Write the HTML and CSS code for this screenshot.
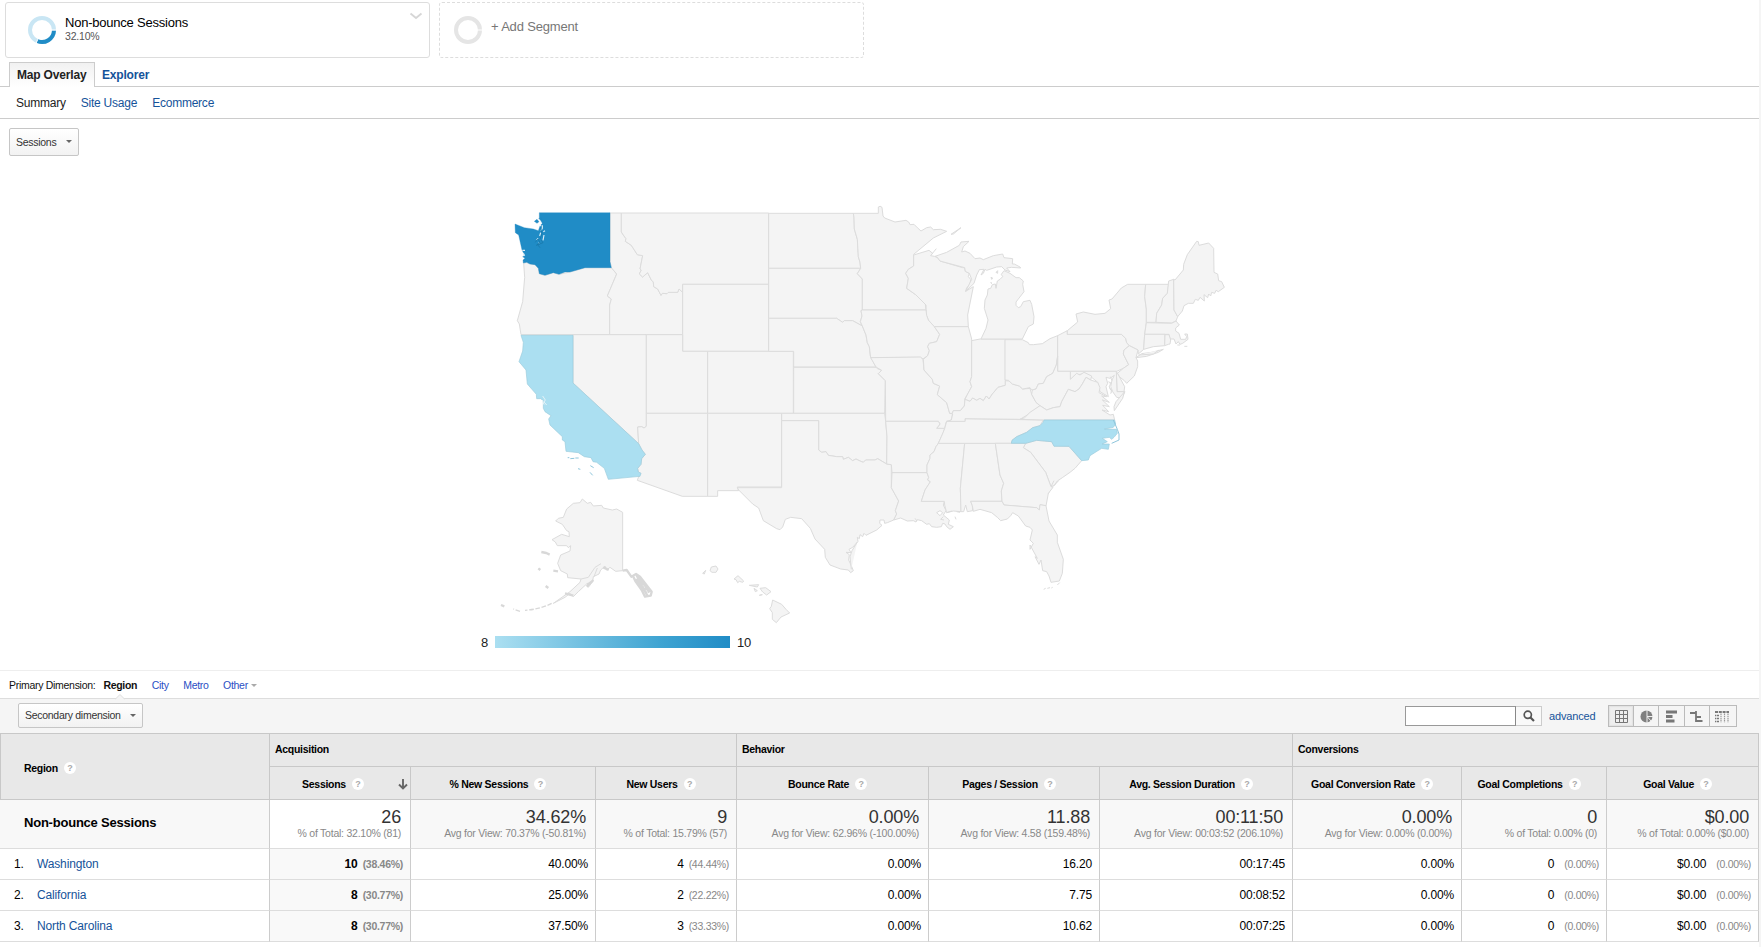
FILE: index.html
```html
<!DOCTYPE html>
<html lang="en">
<head>
<meta charset="utf-8">
<title>Location - Map Overlay</title>
<link rel="stylesheet" href="styles.css">
</head>
<body>
<div class="page">
  <section class="segments">
    <div class="segment">
      <svg class="ring" width="30" height="30" viewBox="0 0 30 30"><g fill="none" stroke-width="4"><circle cx="15" cy="15" r="12" stroke="#c9e6f4"/><path d="M27 15.500A12 12 0 0 1 10.200 26" stroke="#208cc6"/></g><path d="M25 15H29.500M10.800 24.300L9.200 28" stroke="#fff" stroke-width="1"/></svg>
      <div class="segment-text"><div class="segment-name">Non-bounce Sessions</div><div class="segment-pct">32.10%</div></div>
      <svg class="chevron" width="14" height="8" viewBox="0 0 14 8"><path d="M1.500 1.500L7 6L12.500 1.500" fill="none" stroke="#d6d6d6" stroke-width="1.800"/></svg>
    </div>
    <div class="segment segment-add">
      <svg class="ring" width="30" height="30" viewBox="0 0 30 30"><circle cx="15" cy="15" r="12" fill="none" stroke="#e5e5e5" stroke-width="4"/><path d="M25 15H29.500" stroke="#fff"/></svg>
      <div class="segment-label">+ Add Segment</div>
    </div>
  </section>
  <nav class="tabs"><a class="tab tab-active">Map Overlay</a><a class="tab">Explorer</a></nav>
  <nav class="subnav"><span>Summary</span><a>Site Usage</a><a>Ecommerce</a></nav>
  <section class="overlay">
    <button class="btn metric">Sessions<i class="caret"></i></button>
    <svg class="map" width="1759" height="440" viewBox="-1470 0 5277 1320">
      <g class="states">
        <!-- West -->
        <path d="M101 219L110 217L120 222L135 224L145 235L148 251L165 256L190 248L207 253L240 246L285 233H364L380 252L352 318L364 327L359 345V434H93L88 402L82 392L98 335L104 262Z"/>
        <path d="M360 69H394V126L402 138L408 146L406 154L424 166L442 194L458 197L450 237L454 240L448 252L458 261L473 248L484 270L490 276L491 290L503 297L513 316L517 310L531 311L535 307H563L567 297L578 307V434H359V345L364 327L352 318L380 252L364 233L360 215Z"/>
        <path d="M394 69H836V283H578V307L567 297L563 307H535L531 311L517 310L513 316L503 297L491 290L490 276L484 270L473 248L458 261L448 252L454 240L450 237L458 197L442 194L424 166L406 154L408 146L402 138L394 126Z"/>
        <path d="M578 283H836V484H578Z"/>
        <path d="M249 434H469V709L462 714L455 710L443 711L446 761L249 579Z"/>
        <path d="M469 434H578V484H653V670H469Z"/>
        <path d="M469 670H653V919H577L442 871L446 860L453 850L445 846L443 835L453 823L455 806L466 793L456 780L446 761L443 711L455 710L462 714L469 709Z"/>
        <path d="M653 484H910V670H653Z"/>
        <path d="M653 670H875V891H742L746 902H683V919H653Z"/>
        <!-- Central -->
        <g transform="translate(870 0)">
          <path d="M-34 70H220L222 82L223 117L232 148L235 200L240 217L242 235H-34Z"/>
          <path d="M-34 235H242L232 251L247 267V360L243 362L246 378L241 395L247 408L218 392H193L188 397L170 385H-34Z"/>
          <path d="M-34 385H170L188 397L193 392H218L247 408L258 435L262 458L268 470L271 498L288 531H41V484H-34Z"/>
          <path d="M41 532H288L292 536L305 541L295 551L316 572L314 670H41Z"/>
          <path d="M5 670H314L317 694L321 740L320 822L293 806L285 810H257L250 817L240 813L228 807L218 812L205 802L190 808L188 800H170L145 796L138 785L125 787L116 780V692H5Z"/>
          <path d="M5 692H116V780L125 787L138 785L145 796L170 800H188L190 808L205 802L218 812L228 807L240 813L250 817L257 810H285L293 806L320 822L334 824V893L356 933L346 962L350 972L341 990L322 998L314 1000L312 990L300 990L299 1000L306 1006L290 1020L258 1036L252 1030L248 1040L240 1034L238 1046L232 1042L234 1054L218 1072L207 1078L213 1088L198 1087L208 1094L206 1110L213 1125L220 1142L212 1148L205 1140L182 1137L150 1125L136 1102L134 1078L105 1047L91 1015L65 986L32 982L16 988L8 1011L0 1019L-10 1016L-50 992L-64 954L-82 942L-124 900L-128 893H5Z"/>
          <path d="M214 1138L210 1100L216 1082L232 1056" fill="none"/>
          <path d="M220 70H295V51Q300 46 306 52L309 78L314 84L345 96L378 91L386 96L390 104L402 103L412 113L423 123L440 113L452 111L460 119L482 118L500 124L460 144L401 193V228L385 238L377 250L385 265L380 295L407 314L436 343L438 360H247V267L232 251L242 235L240 217L235 200L232 148L223 117L222 82Z"/>
          <path d="M401 195L447 181L458 190L452 197L463 199L472 202L480 213L548 233L554 233L556 244L568 250L565 260L572 268L570 285L560 293L557 304L580 290L563 375L565 410H463L447 395L439 375L438 345L407 314L380 295L385 265L377 250L385 238L401 228Z"/>
          <path d="M465 199L500 187L538 166L543 156L567 154L550 170L545 186L555 183L570 190L585 206L600 204L610 209L640 197L668 192L672 203L698 206L697 222L703 222L720 231L722 234L695 232L680 234L690 245L675 240L665 230L650 231L620 241L615 238L610 250L603 255L612 238L598 239L590 255L582 280L557 304L575 268L568 250L556 244L554 233L480 213L472 202Z"/>
          <path d="M513 133L543 113L520 132Z"/><path d="M455 193L469 176"/>
          <path d="M648 247l5 -5v8zM633 262l5 2l-3 4zM632 278l4 2z"/>
          <path d="M247 360H438L440 376L445 390L463 410L479 433L470 455L448 460L443 470L448 482L443 497L429 507L421 502L272 503L268 470L262 458L258 435L247 408L241 395L246 378L243 362Z"/>
          <path d="M272 503L421 501L429 508L432 540L457 568L460 580L479 588L472 614L500 638L509 670L518 672L514 690L498 697L494 716L470 715L480 702L475 694H317L316 572L295 551L305 541L288 531Z"/>
          <path d="M463 410H565L575 447V560L570 575L575 590L563 612L555 625L553 648L541 662H520L517 670H509L500 638L472 614L479 588L460 580L457 568L432 540L430 508L443 497L448 482L443 470L448 460L470 455L479 433Z"/>
          <path d="M575 452L600 447H676V586L654 592L637 612L627 627L619 618L610 632L600 625L590 631L578 624L570 634L555 628L563 612L575 590L570 575L575 560Z"/>
          <path d="M317 694H475L480 702L470 715H494L490 728L484 740L475 760L468 770L462 785L450 795V805L441 825V848H336L334 824L320 822L321 740Z"/>
          <path d="M336 848H441L446 862L443 870L451 876L435 900L424 934H493L490 945L498 962L490 975L508 990L505 1003L520 1010L510 1018L500 1010L495 1002L488 1000L484 1010L470 1012L455 1010L448 1001L440 1003L425 992L412 989L408 996L400 992L382 993L362 984L341 990L350 972L346 962L356 933L334 893Z"/>
          <path d="M475 760H554L541 895L543 965L520 963L500 968L494 945L493 934H424L435 900L451 875L443 870L446 862L441 848V825L450 805V795L462 785L468 770Z"/>
          <path d="M554 760H646L660 855L671 880L664 903L666 934H572L577 947L578 962L562 965L557 945L551 965L543 965L541 895Z"/>
          <path d="M500 694H555V686L790 690L780 707L758 713L740 727L710 740L696 751L694 760H475L484 740L494 716Z"/>
          <path d="M676 572L688 573L697 582L718 588L728 597L750 595L755 613L768 637L780 647L750 670L720 688L555 686V694H500L514 690L518 672L517 670L520 662H541L553 648L555 628L570 634L578 624L590 631L600 625L610 632L619 618L627 627L637 612L654 592L676 586Z"/>
          <path d="M470 968L480 962L488 968L480 977Z" class="water"/><path d="M500 968l15 -5M525 980l3 8M530 965l10 2M490 980l-8 8l10 2M405 985l6 8" />
        </g>
        <!-- East -->
        <g transform="translate(1470 90)">
          <path d="M3 357L18 325L24 300L13 265L15 240L22 225L24 207L32 205L37 194L46 192L48 205L52 183L60 178L68 170L64 163L72 152L90 160L108 173H118L130 183L128 193L132 215L122 228L108 246V256L115 263L122 260L130 245L150 241L155 253L162 290L160 312L145 320L127 357Z"/>
          <path d="M75 359H127L145 368L148 374H160L187 371L210 356L233 347V408L229 435L218 460L200 470L190 490L175 492L168 507L155 510L150 503L128 507L118 498L97 492L85 481L75 480Z"/>
          <path d="M233 347L262 332V343H424L437 355L440 368L448 377L432 390L430 402L446 434L430 445L410 454H233Z"/>
          <path d="M262 332L293 306L288 282L310 276L345 283L375 280L392 266L387 240L396 237L424 204L443 193H497L494 230L499 267V308L494 343L491 388L475 402L474 390L448 377L440 368L437 355L424 343H262Z"/>
          <path d="M468 413L485 401L515 397L550 388L535 397L500 409Z"/><path d="M476 405L520 402L535 391"/>
          <path d="M497 193H566L562 220L548 235L545 255L530 280L528 307H499V267L494 230Z"/>
          <path d="M566 183L581 178L582 270L593 290L588 303L575 309L528 307L530 280L545 255L548 235L562 220Z"/>
          <path d="M581 178L585 180L610 150L611 133L622 104L650 64L655 65L657 76L686 69L701 85L702 157L713 162L716 182L725 185L733 202L715 215L708 211L704 220L695 217L692 228L686 222L683 233L672 224L673 243L660 232L655 241L646 238L640 250L625 250L612 257L607 273L593 290L582 270Z"/>
          <path d="M499 308L575 310L588 303L598 315L587 324V333L597 340L602 358H617L620 350L614 342L622 342L624 358L608 370L600 373L595 365L588 372L582 357L570 357L567 343H494Z"/><path d="M592 375h8M613 379h9"/>
          <path d="M494 343H555L554 377L520 380L491 388Z"/>
          <path d="M555 344H567L572 360L570 372L565 373L554 377Z"/>
          <path d="M448 377L474 390L468 413L473 423V440L463 468L440 490L433 482L418 470L412 460L430 445L446 434L430 402L432 390Z"/>
          <path d="M409 454L418 470L434 500L432 515H411Z"/>
          <path d="M271 454H409L411 515H435L425 535L410 532L398 515L392 500L396 480L403 466L390 475L378 472L383 490L378 500L385 530L360 515L353 487L335 472L318 460L305 462L290 465L271 478Z"/>
          <path d="M385 485l8 4l-6 12l9 8M391 470l5 12M388 505l8 8l-4 8"/>
          <path d="M233 408V454H271V478L290 460L300 465L312 457L335 468L332 480L318 472L307 492L297 507L285 515L265 508L245 545L240 560L220 563L200 570L180 557L168 547L155 523L157 510L168 507L175 492L190 490L200 470L218 460L229 435Z"/>
          <path d="M120 598L134 593L150 577L180 557L200 570L220 563L240 560L245 545L265 508L285 515L297 507L307 492L318 472L332 480L353 487L360 503L357 518L380 530L365 528L388 547L367 540L388 560L368 556L386 575L366 570L390 585L400 583L404 600H192Z"/>
          <path d="M433 516L428 535L403 572L402 560L408 545Z"/>
          <path d="M137 670L170 661L215 665L222 677L267 679L305 722L285 745L270 757L247 773L232 783L222 797L213 800L197 757L152 697L130 683Z"/>
          <path d="M213 800L222 782M220 799L236 782M205 822L212 802"/>
          <path d="M46 670H137L130 683L152 697L197 757L213 800L219 802L205 820L198 858L180 854L178 870L170 863L72 855L66 844L64 813L71 790L60 765Z"/>
          <path d="M-28 844H66L72 855L170 863L178 870L180 854L198 857L207 903L232 945V967L250 1018L247 1060L238 1083L213 1087L207 1068L200 1055L188 1052L183 1020L177 1033L165 1010L172 1015L150 975L150 988L160 970L150 960L157 930L150 922L137 918L115 888L98 878L92 887L82 897L62 902L52 892L35 878L0 868L-20 874L-23 857Z"/>
          <path d="M191 1108l6 -3M202 1105l8 -2M214 1104l4 -2M232 1095l7 -7" />
        </g>
        <!-- Alaska and Hawaii -->
        <g transform="translate(-60 870)">
          <path d="M458 97V272L437 274L420 262L410 270L405 258L392 270L387 282L370 290L368 305L355 322L352 310L325 335L310 350L300 340L285 352L250 370L300 335L330 307L333 297L293 293L292 282L272 272L263 250L272 225L300 213L302 197L295 203L290 197L262 197L256 186L246 179L275 163L298 170L297 155L290 152L277 133L257 123L265 115L280 112L290 87L310 70L330 68L337 57L352 70L362 67L370 78L395 76L400 84L427 90L440 87Z"/>
          <path d="M333 297L355 292L375 262L393 251M382 264L372 290"/>
          <path class="isles" d="M458 272L470 270L484 290L498 282L510 290L545 335L542 347L525 350L515 330L497 305L490 290M500 286L532 347M508 289L538 338M494 300L512 298M505 315L525 312M514 330L538 325M400 262L416 270M350 320L370 300M352 314L364 306M285 340L310 347M502 300L530 340"/>
          <path class="isles chain" d="M245 370Q210 388 165 391M150 394L130 387"/>
          <path class="isles" d="M93 375l10 4M214 216l15 3l10 5M205 265l6 5M250 272l14 2M227 318l8 6"/>
          <path d="M720 272L724 261L738 258L744 267L738 277L726 277ZM698 280l9 -9l-4 11ZM792 297L804 287L821 303L818 307L808 304L803 308L798 299ZM838 316L866 314L862 321ZM852 325l10 7l-6 3ZM870 325L887 323L903 335L890 345L878 336ZM868 346l9 -2ZM899 386L904 379L908 360L935 373L948 388L959 399L933 411L919 428L907 418V398Z"/>
        </g>
      </g>
      <g class="light">
        <path d="M93 436H249V579L446 761L456 780L466 793L455 806L453 823L443 835L445 846L453 850L450 859L355 868L343 835L320 817L309 815L303 803L283 800L265 788L228 784L225 755L217 750V740L180 705L176 687L183 677L165 665L160 655V632L152 626H140L139 613L112 582L108 540L87 515L98 483L100 457Z"/>
        <path d="M233 803h5M241 806l12 -1M256 804h10M264 836l7 2M301 827l10 6M300 847l8 9" class="bit"/>
        <g transform="translate(1470 90)"><path d="M192 600H404L407 612L400 622L373 627L410 628L412 640L402 652L395 658L388 652L367 655L382 665L366 672L388 672L385 688L365 685L330 707L325 720L305 722L267 679H222L215 665L170 661L137 670H94L96 661L110 650L140 637L158 623L180 617L190 606Z"/><path class="bank" d="M400 600L412 628L417 642V660L395 670"/></g>
      </g>
      <path class="inlet" d="M158 618l8 12l-4 6l8 9M157 630l5 14"/>
      <g class="dark">
        <path d="M148 68H360V215L364 233H285L240 246H225L207 253L190 248L165 256L148 251L145 235L135 224L120 222L110 217L100 219L99 210L105 205L98 200L104 195L96 180L86 135L76 128L75 102L103 113L130 117L145 122L150 108L157 100L148 85Z"/>
        <path d="M133 94l8 -6l6 7l-6 5ZM146 86l8 -2l2 7z"/>
        <path class="sound" d="M149 104l4 4M157 106v8l-4 8M160 125l5 -3M152 128l-3 10M162 135l-3 16M140 150l4 -5M147 158l-1 3M97 181h8M99 197l6 -2M101 190v4"/>
        <path class="shore" d="M136 157l8 -10l6 10l-8 6l8 10M152 112l4 18l-6 18M138 166l12 -4M153 150l6 8l-10 4"/>
      </g>
    </svg>
    <div class="legend"><span>8</span><div class="ramp"></div><span>10</span></div>
  </section>
  <section class="dimensions"><span>Primary Dimension:</span><b>Region</b><a>City</a><a>Metro</a><a>Other<i class="caret caret-small"></i></a></section>
  <section class="toolbar">
    <svg class="notch" width="10" height="6" viewBox="0 0 10 6"><path d="M0 5.500L5 .5L10 5.500" fill="#f5f5f5" stroke="#ddd"/></svg>
    <button class="btn secondary">Secondary dimension<i class="caret"></i></button>
    <div class="tools">
      <div class="search"><input type="text" aria-label="Search"><span class="go"><svg width="12" height="12" viewBox="0 0 12 12"><circle cx="4.800" cy="4.800" r="3.600" fill="none" stroke="#555" stroke-width="1.700"/><path d="M7.500 7.500L11 11" stroke="#555" stroke-width="2.200"/></svg></span></div>
      <a class="advanced">advanced</a>
      <div class="views">
        <span class="on"><svg width="13" height="13" viewBox="0 0 13 13"><path d="M.5 .5H12.500V12.500H.5ZM.5 4.500H12.500M.5 8.500H12.500M4.500 .5V12.500M8.500 .5V12.500" fill="none" stroke="#777"/></svg></span>
        <span><svg width="13" height="13" viewBox="0 0 13 13"><circle cx="6.500" cy="6.500" r="6" fill="#808080"/><path d="M7 0V6.500H13M7 6.500V13M7.500 7L11 11" stroke="#f0f0f0" fill="none"/></svg></span>
        <span><svg width="13" height="13" viewBox="0 0 13 13"><path d="M1 2H12M1 6.500H7.500M1 11H9.500" stroke="#777" stroke-width="2.800"/></svg></span>
        <span><svg width="13" height="13" viewBox="0 0 13 13"><path d="M0 3H6.500M6.500 7H11M6.500 11H12.500M6 1V12" stroke="#777" stroke-width="1.800"/></svg></span>
        <span><svg width="14" height="13" viewBox="0 0 14 13"><path d="M0 2H14" stroke="#777" stroke-width="1.800" stroke-dasharray="3 .8"/><path d="M0 5.500H4M0 8.500H4M0 11.500H4" stroke="#777" stroke-width="1.500" stroke-dasharray="1 .6 3"/><path d="M6 3.500V12.500M9.500 3.500V12.500M13 3.500V12.500" stroke="#999" stroke-width="1.200" stroke-dasharray="1.500 .7"/></svg></span>
      </div>
    </div>
  </section>
  <table class="report">
    <colgroup><col class="c0"><col class="c1"><col class="c2"><col class="c3"><col class="c4"><col class="c5"><col class="c6"><col class="c7"><col class="c8"><col class="c9"></colgroup>
    <thead>
      <tr class="groups"><th rowspan="2" class="region">Region<i class="help">?</i></th><th colspan="3">Acquisition</th><th colspan="3">Behavior</th><th colspan="3">Conversions</th></tr>
      <tr class="metrics">
        <th class="sorted">Sessions<i class="help">?</i><svg class="arrow" width="10" height="11" viewBox="0 0 10 11"><path d="M5 0V9M1 5.500L5 9.500L9 5.500" fill="none" stroke="#666" stroke-width="1.900"/></svg></th>
        <th>% New Sessions<i class="help">?</i></th><th>New Users<i class="help">?</i></th><th>Bounce Rate<i class="help">?</i></th><th>Pages / Session<i class="help">?</i></th><th>Avg. Session Duration<i class="help">?</i></th><th>Goal Conversion Rate<i class="help">?</i></th><th>Goal Completions<i class="help">?</i></th><th>Goal Value<i class="help">?</i></th>
      </tr>
    </thead>
    <tbody>
      <tr class="summary"><th>Non-bounce Sessions</th>
        <td class="white"><div class="big">26</div><div class="note">% of Total: 32.10% (81)</div></td>
        <td><div class="big">34.62%</div><div class="note">Avg for View: 70.37% (-50.81%)</div></td>
        <td><div class="big">9</div><div class="note">% of Total: 15.79% (57)</div></td>
        <td><div class="big">0.00%</div><div class="note">Avg for View: 62.96% (-100.00%)</div></td>
        <td><div class="big">11.88</div><div class="note">Avg for View: 4.58 (159.48%)</div></td>
        <td><div class="big">00:11:50</div><div class="note">Avg for View: 00:03:52 (206.10%)</div></td>
        <td><div class="big">0.00%</div><div class="note">Avg for View: 0.00% (0.00%)</div></td>
        <td><div class="big">0</div><div class="note">% of Total: 0.00% (0)</div></td>
        <td><div class="big">$0.00</div><div class="note">% of Total: 0.00% ($0.00)</div></td></tr>
      <tr class="row"><td class="name"><span>1.</span><a>Washington</a></td><td class="key">10<small>(38.46%)</small></td><td>40.00%</td><td>4<small>(44.44%)</small></td><td>0.00%</td><td>16.20</td><td>00:17:45</td><td>0.00%</td><td class="goal">0<small>(0.00%)</small></td><td class="goal">$0.00<small>(0.00%)</small></td></tr>
      <tr class="row"><td class="name"><span>2.</span><a>California</a></td><td class="key">8<small>(30.77%)</small></td><td>25.00%</td><td>2<small>(22.22%)</small></td><td>0.00%</td><td>7.75</td><td>00:08:52</td><td>0.00%</td><td class="goal">0<small>(0.00%)</small></td><td class="goal">$0.00<small>(0.00%)</small></td></tr>
      <tr class="row"><td class="name"><span>3.</span><a>North Carolina</a></td><td class="key">8<small>(30.77%)</small></td><td>37.50%</td><td>3<small>(33.33%)</small></td><td>0.00%</td><td>10.62</td><td>00:07:25</td><td>0.00%</td><td class="goal">0<small>(0.00%)</small></td><td class="goal">$0.00<small>(0.00%)</small></td></tr>
    </tbody>
  </table>
</div>
</body>
</html>
```
FILE: styles.css
```css
* { box-sizing: border-box; }
body { margin: 0; background: #f5f5f5; font: 10.5px "Liberation Sans", Arial, sans-serif; letter-spacing: -.29px; color: #222; overflow: hidden; }
.page { width: 1759px; height: 947px; background: #fff; }
a { color: #15539a; }
.segments { display: flex; gap: 9px; height: 62px; padding: 2px 0 0 5px; }
.segment { display: flex; width: 425px; height: 56px; border: 1px solid #ddd; border-radius: 3px; padding: 11px 6px 0 21px; }
.segment-add { border: 1px dashed #ddd; padding-left: 13px; }
.ring { flex: none; margin-top: 1px; }
.segment-text { flex: 1; padding: 1px 0 0 8px; }
.segment-name { font-size: 13px; letter-spacing: -.22px; line-height: 15px; color: #000; }
.segment-pct { font-size: 10.500px; letter-spacing: -.2px; line-height: 12px; color: #555; }
.segment-label { padding: 5px 0 0 8px; font-size: 13px; letter-spacing: -.18px; line-height: 15px; color: #777; }
.chevron { margin-top: -2px; }
.tabs { display: flex; height: 25px; padding-left: 9px; border-bottom: 1px solid #ccc; font-size: 12px; letter-spacing: -.18px; font-weight: bold; line-height: 24px; }
.tab { height: 25px; padding: 1px 7px 0; }
.tab-active { width: 86px; padding: 0 7px; border: 1px solid #ccc; border-bottom: 0; background: linear-gradient(#f1f1f1, #fff); color: #222; }
.subnav { display: flex; gap: 15px; height: 32px; padding-left: 16px; border-bottom: 1px solid #ccc; font-size: 12px; letter-spacing: -.23px; line-height: 32px; color: #222; }
.overlay { height: 551px; padding-top: 9px; }
.btn { display: flex; justify-content: space-between; align-items: center; border: 1px solid #c6c6c6; border-radius: 2px; background: linear-gradient(#fff, #f2f2f2); color: #333; font: 10.5px "Liberation Sans", Arial, sans-serif; letter-spacing: -.28px; padding: 0 6px 1px; }
.caret { width: 0; border: 3px solid transparent; border-top: 3.500px solid #666; border-bottom: 0; }
.metric { width: 70px; height: 28px; margin-left: 9px; }
.map { display: block; margin-top: 34px; overflow: visible; }
.states path { fill: #f4f4f4; stroke: #dcdcdc; stroke-width: 3; stroke-linejoin: round; }
.states .water { fill: #fff; }
.states .isles { fill: none; stroke: #d8d8d8; stroke-width: 7; }
.states .chain { stroke-width: 4; stroke-dasharray: 14 5; }
.light path { fill: #abdff1; stroke: #9ccbdc; stroke-width: 2; }
.light .bit, .light .bank { fill: none; stroke: #8fc6dc; stroke-width: 3; }
.inlet { fill: none; stroke: #e4f3f8; stroke-width: 3; }
.dark path { fill: #208cc6; stroke: #1e86be; stroke-width: 1; }
.dark .sound { fill: none; stroke: #dceef7; stroke-width: 3.500; }
.dark .shore { fill: none; stroke: #1878ab; stroke-width: 2.500; }
.legend { display: flex; gap: 7px; margin: 6px 0 0 481px; align-items: center; height: 12px; font-size: 13px; letter-spacing: -.2px; color: #222; }
.ramp { width: 235px; height: 12px; background: linear-gradient(90deg, #abdff1, #3fa4d2 70%, #208cc6); }
.dimensions { display: flex; height: 29px; padding-left: 9px; border-top: 1px solid #eee; border-bottom: 1px solid #ddd; line-height: 29px; color: #111; }
.dimensions b { margin-left: 8px; }
.dimensions a { margin-left: 14.500px; color: #2a4fc4; }
.caret-small { display: inline-block; vertical-align: 2px; margin-left: 3px; border-top-color: #aaa; }
.toolbar { position: relative; display: flex; justify-content: space-between; height: 34px; padding: 4px 22px 0 18px; background: #f5f5f5; }
.notch { position: absolute; left: 115px; top: -5px; }
.secondary { width: 125px; height: 25px; }
.tools { display: flex; align-items: center; height: 26px; }
.search { display: flex; width: 137px; height: 20px; }
.search input { width: 111px; height: 20px; border: 1px solid #999; border-right-color: #888; background: #fff; padding: 0; }
.go { flex: 1; display: flex; align-items: center; justify-content: center; border: 1px solid #ccc; border-left: 0; background: #f9f9f9; }
.advanced { width: 46px; margin: 0 13px 0 7px; font-size: 11px; letter-spacing: -.15px; }
.views { display: flex; width: 129px; height: 22px; border: 1px solid #bbb; }
.views span { flex: 1; display: flex; align-items: center; justify-content: center; border-left: 1px solid #bbb; }
.views span:last-child { padding-right: 2px; }
.views .on { border-left: 0; background: #eee; box-shadow: inset 0 0 1px 1px #e2e2e2; }
.report { width: 1759px; table-layout: fixed; border-collapse: separate; border-spacing: 0; border-top: 1px solid #c8c8c8; }
.c0 { width: 270px; } .c1 { width: 141px; } .c2 { width: 185px; } .c3 { width: 141px; } .c4 { width: 192px; }
.c5 { width: 171px; } .c6 { width: 193px; } .c7 { width: 169px; } .c8 { width: 145px; } .c9 { width: 152px; }
.report th, .report td { padding: 0; border-right: 1px solid #ccc; border-bottom: 1px solid #ddd; color: #000; white-space: nowrap; }
.report thead th { background: #e8e8e8; border-color: #c8c8c8; }
.report .groups th { height: 33px; padding: 0 0 2px 5px; text-align: left; }
.report .groups .region { padding: 3px 0 0 23px; border-left: 1px solid #c8c8c8; }
.report .metrics th { height: 33px; padding: 2px 10px 0 0; position: relative; }
.report .metrics .sorted { padding-right: 14px; }
.arrow { position: absolute; right: 2px; top: 12px; }
.help { display: inline-block; width: 12px; height: 12px; margin-left: 6px; border-radius: 50%; background: #fff; color: #aaa; font: bold 9px/12px "Liberation Sans", Arial, sans-serif; text-align: center; vertical-align: 1px; }
.report .summary th { height: 49px; padding: 0 0 3px 24px; background: #f8f8f8; text-align: left; font-size: 13px; letter-spacing: -.22px; }
.report .summary td { background: #f8f8f8; padding-right: 9px; text-align: right; vertical-align: top; }
.report .summary .white { background: #fff; }
.big { padding: 7px 0 0; font-size: 18px; letter-spacing: -.15px; line-height: 20px; color: #333; }
.summary .note { line-height: 12px; color: #888; letter-spacing: -.24px; }
.report .row td { height: 31px; padding: 0 7px 0 0; text-align: right; font-size: 12px; letter-spacing: -.15px; }
.report .row .name { padding: 0 0 0 14px; text-align: left; }
.name span { display: inline-block; width: 23px; }
.row .key { background: #f9f9f9; font-weight: bold; }
.row small { margin-left: 5px; font-size: 10.500px; letter-spacing: -.28px; color: #888; }
.row .goal small { margin-left: 10px; }
```
